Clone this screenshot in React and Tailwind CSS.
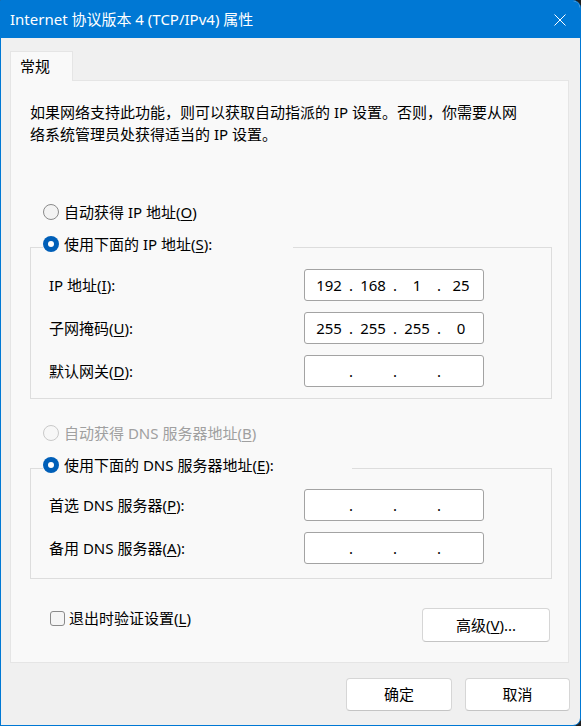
import React from 'react';

const ipAddress = ['192', '168', '1', '25'];
const subnetMask = ['255', '255', '255', '0'];
const emptyIp = ['', '', '', ''];

function Radio({ checked, disabled }) {
  if (checked) {
    return (
      <span className="w-4 h-4 shrink-0 rounded-full bg-[#005fb8] flex items-center justify-center">
        <span className="w-[6px] h-[6px] rounded-full bg-white" />
      </span>
    );
  }
  return (
    <span
      className={`w-4 h-4 shrink-0 rounded-full border ${
        disabled ? 'border-[#c9c9c9] bg-[#f7f7f7]' : 'border-[#8a8a8a] bg-[#f3f3f3]'
      }`}
    />
  );
}

function Key({ children }) {
  return <span className="underline underline-offset-2 decoration-1">{children}</span>;
}

function IpField({ parts }) {
  return (
    <div className="w-[180px] h-[32px] shrink-0 bg-white border border-[#a3a3a3] rounded-[3px] flex items-center pl-[2px]">
      {parts.map((part, i) => (
        <React.Fragment key={i}>
          <span className="w-[44px] text-center">{part}</span>
          {i < 3 && <span className="w-0 flex justify-center">.</span>}
        </React.Fragment>
      ))}
    </div>
  );
}

function FieldRow({ label, parts }) {
  return (
    <div className="flex items-center h-[32px] pl-[18px]">
      <span className="w-[255px]">{label}</span>
      <IpField parts={parts} />
    </div>
  );
}

function Button({ children, className = '' }) {
  return (
    <div
      className={`flex items-center justify-center bg-white border border-[#d6d6d6] border-b-[#c4c4c4] rounded-[4px] ${className}`}
    >
      {children}
    </div>
  );
}

export default function App() {
  return (
    <div className="w-[581px] h-[726px] bg-[#1f1f1f] text-[15px] text-black font-['Noto_Sans','Noto_Sans_CJK_SC',sans-serif]">
      <div className="h-full flex flex-col border border-[#0078d4] rounded-r-[8px] overflow-hidden bg-[#f0f0f0]">
        {/* Title bar */}
        <div className="h-[37px] shrink-0 bg-[#0078d4] flex items-center pl-[9px] text-white">
          <span className="flex-1">Internet 协议版本 4 (TCP/IPv4) 属性</span>
          <div className="w-[40px] h-full flex items-center justify-center">
            <svg width="12" height="12" viewBox="0 0 12 12" fill="none" stroke="white" strokeWidth="1">
              <path d="M0.5 0.5 L11.5 11.5 M11.5 0.5 L0.5 11.5" />
            </svg>
          </div>
        </div>

        {/* Body */}
        <div className="flex-1 flex flex-col pt-[13px]">
          <div className="pl-[9px]">
            <div className="relative z-10 -mb-px w-[63px] h-[30px] border border-b-0 border-[#e5e5e5] bg-[#f9f9f9] flex items-center pl-[9px]">
              常规
            </div>
          </div>

          <div className="ml-[9px] w-[559px] border border-[#e5e5e5] bg-[#f9f9f9] pt-[20px] pl-[19px] pr-[16px] pb-[20px]">
            <p className="leading-[22px] whitespace-nowrap">
              如果网络支持此功能，则可以获取自动指派的 IP 设置。否则，你需要从网
              <br />
              络系统管理员处获得适当的 IP 设置。
            </p>

            <div className="mt-[56px] ml-[13px] h-[22px] flex items-center gap-[5px]">
              <Radio />
              <span>
                自动获得 IP 地址(<Key>O</Key>)
              </span>
            </div>

            <fieldset className="mt-[12px] border border-[#dddddd] pt-[10px] pb-[11px]">
              <legend className="ml-[12px] w-[250px] h-[24px] pb-[6px]">
                <div className="h-full flex items-center gap-[5px]">
                  <Radio checked />
                  <span>
                    使用下面的 IP 地址(<Key>S</Key>):
                  </span>
                </div>
              </legend>
              <div className="flex flex-col gap-[11px]">
                <FieldRow
                  label={<>IP 地址(<Key>I</Key>):</>}
                  parts={ipAddress}
                />
                <FieldRow
                  label={<>子网掩码(<Key>U</Key>):</>}
                  parts={subnetMask}
                />
                <FieldRow
                  label={<>默认网关(<Key>D</Key>):</>}
                  parts={emptyIp}
                />
              </div>
            </fieldset>

            <div className="mt-[23px] ml-[13px] h-[22px] flex items-center gap-[5px] text-[#a0a0a0]">
              <Radio disabled />
              <span>
                自动获得 DNS 服务器地址(<Key>B</Key>)
              </span>
            </div>

            <fieldset className="mt-[12px] border border-[#dddddd] pt-[9px] pb-[14px]">
              <legend className="ml-[12px] w-[309px] h-[24px] pb-[6px]">
                <div className="h-full flex items-center gap-[5px]">
                  <Radio checked />
                  <span>
                    使用下面的 DNS 服务器地址(<Key>E</Key>):
                  </span>
                </div>
              </legend>
              <div className="flex flex-col gap-[11px]">
                <FieldRow
                  label={<>首选 DNS 服务器(<Key>P</Key>):</>}
                  parts={emptyIp}
                />
                <FieldRow
                  label={<>备用 DNS 服务器(<Key>A</Key>):</>}
                  parts={emptyIp}
                />
              </div>
            </fieldset>

            <div className="mt-[29px] flex items-start justify-between">
              <div className="ml-[20px] h-[20px] flex items-center gap-[4px]">
                <span className="w-[15px] h-[15px] rounded-[3px] border border-[#8a8a8a] bg-[#f5f5f5]" />
                <span>
                  退出时验证设置(<Key>L</Key>)
                </span>
              </div>
              <Button className="w-[128px] h-[34px] mr-[2px]">
                <span>
                  高级(<Key>V</Key>)...
                </span>
              </Button>
            </div>
          </div>

          {/* Footer */}
          <div className="flex justify-end gap-[13px] pt-[15px] pr-[10px]">
            <Button className="w-[106px] h-[33px]">确定</Button>
            <Button className="w-[105px] h-[33px]">取消</Button>
          </div>
        </div>
      </div>
    </div>
  );
}
